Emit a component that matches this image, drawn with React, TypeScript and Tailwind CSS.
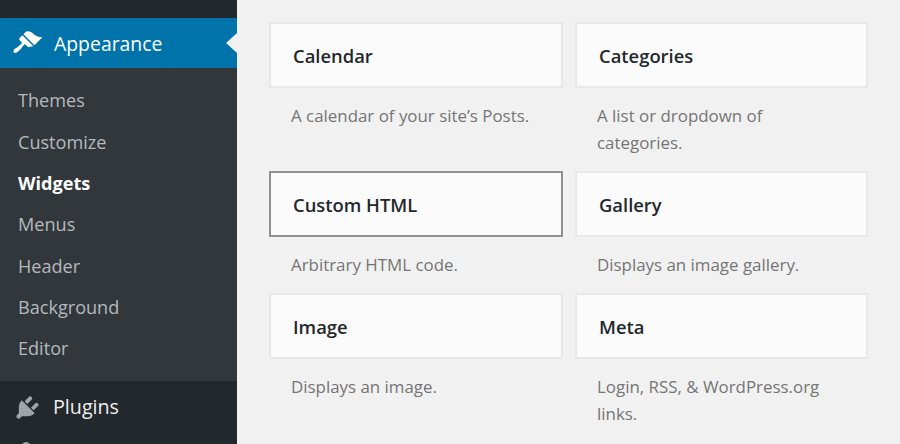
const submenu = ["Themes", "Customize", "Widgets", "Menus", "Header", "Background", "Editor"];

const widgets = [
  { title: "Calendar", desc: "A calendar of your site’s Posts.", rowClass: "h-[149px]" },
  { title: "Categories", desc: "A list or dropdown of categories.", rowClass: "h-[149px]" },
  { title: "Custom HTML", desc: "Arbitrary HTML code.", rowClass: "h-[122px]", active: true },
  { title: "Gallery", desc: "Displays an image gallery.", rowClass: "h-[122px]" },
  { title: "Image", desc: "Displays an image.", rowClass: "h-[150px]" },
  { title: "Meta", desc: "Login, RSS, & WordPress.org links.", rowClass: "h-[150px]" },
];

function BrushIcon() {
  return (
    <svg viewBox="0 0 20 20" className="h-[31px] w-[31px] fill-white">
      <path d="M14.48 11.06L7.41 3.99l1.5-1.5c.5-.56 2.3-.47 3.51.32 1.21.8 1.43 1.28 2.91 2.1 1.18.64 2.45 1.26 4.45.85zm-.71.71L6.7 4.7 4.93 6.47c-.39.39-.39 1.02 0 1.41l1.06 1.06c.39.39.39 1.03 0 1.42-.6.6-1.43 1.11-2.21 1.69-.35.26-.7.53-1.01.84C1.43 13.23.4 14.98 1.2 15.8c.82.8 2.57-.23 3.91-1.57.31-.31.58-.66.84-1.01.58-.78 1.09-1.61 1.69-2.21.39-.39 1.02-.39 1.41 0l1.06 1.06c.39.39 1.02.39 1.41 0z" />
    </svg>
  );
}

function PluginIcon() {
  return (
    <svg viewBox="0 0 20 20" className="h-[29px] w-[29px] fill-[#a0a5aa]">
      <path d="M13.11 4.36L9.87 7.6 8 5.73l3.24-3.24c.35-.34 1.05-.2 1.56.32.52.51.66 1.21.31 1.55zm-8 1.77l.91-1.12 9.01 9.01-1.19.84c-.71.71-2.63 1.16-3.82 1.16H6.14L4.9 17.26c-.59.59-1.54.59-2.12 0-.59-.58-.59-1.53 0-2.12l1.24-1.24v-3.88c0-1.13.4-3.19 1.09-3.89zm7.26 3.97l3.24-3.24c.34-.35 1.04-.21 1.55.31.52.51.66 1.21.31 1.55l-3.24 3.25z" />
    </svg>
  );
}

function Sidebar() {
  return (
    <aside className="flex h-full w-[237px] shrink-0 flex-col overflow-hidden bg-[#23282d]">
      <div className="h-[18px] shrink-0" />
      <div className="relative flex h-[50px] shrink-0 items-center bg-[#0073aa] pl-[12px] text-[19.4px] text-white">
        <BrushIcon />
        <span className="ml-[11px] pt-[2px]">Appearance</span>
        <div className="absolute right-0 top-[15px] h-0 w-0 border-y-[10px] border-r-[11px] border-y-transparent border-r-[#f1f1f1]" />
      </div>
      <ul className="flex h-[313px] shrink-0 flex-col bg-[#32373c] pt-[12px] text-[18.1px]">
        {submenu.map((item) => (
          <li
            key={item}
            className={
              item === "Widgets"
                ? "flex h-[41.4px] shrink-0 items-center pl-[18px] font-bold text-white"
                : "flex h-[41.4px] shrink-0 items-center pl-[18px] text-[#b4b9be]"
            }
          >
            {item}
          </li>
        ))}
      </ul>
      <div className="flex h-[52px] shrink-0 items-center pl-[13px] text-[19.7px] text-[#eeeeee]">
        <PluginIcon />
        <span className="ml-[11px]">Plugins</span>
      </div>
      <div className="ml-[22px] mt-[9px] h-[8px] w-[8px] shrink-0 rounded-full bg-[#a0a5aa]" />
    </aside>
  );
}

export default function App() {
  return (
    <div className="flex h-[444px] w-[900px] overflow-hidden bg-[#f1f1f1] font-['Open_Sans','Noto_Sans',sans-serif]">
      <Sidebar />
      <main className="grid w-[631px] grid-cols-[294px_293px] content-start gap-x-[12px] pl-[32px] pt-[22px]">
        {widgets.map((w) => (
          <div key={w.title} className={w.rowClass}>
            <div
              className={
                w.active
                  ? "flex h-[66px] items-center border-2 border-[#8f8f8f] bg-[#fbfbfb] pl-[22px] pt-[1px] text-[18.4px] font-semibold text-[#23282d]"
                  : "flex h-[66px] items-center border-2 border-[#e8e8e8] bg-[#fbfbfb] pl-[22px] pt-[1px] text-[18.4px] font-semibold text-[#23282d]"
              }
            >
              {w.title}
            </div>
            <p className="mt-[14px] w-[270px] pl-[22px] text-[16.9px] leading-[27px] text-[#757575]">{w.desc}</p>
          </div>
        ))}
      </main>
    </div>
  );
}
